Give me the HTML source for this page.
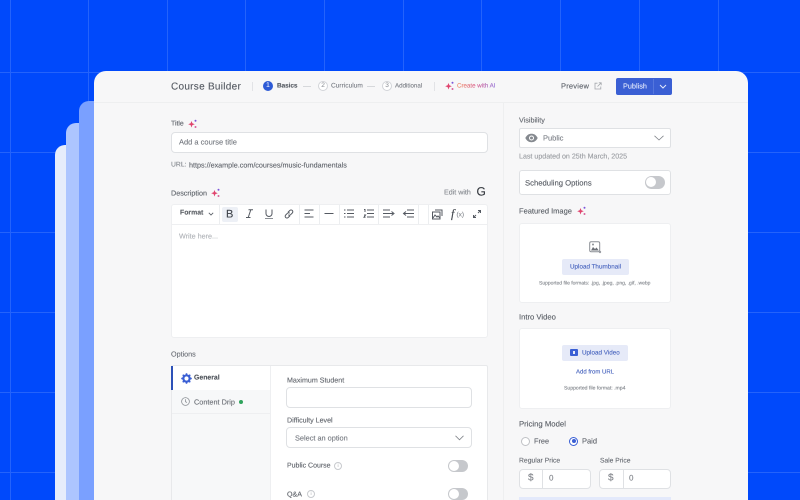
<!DOCTYPE html>
<html><head><meta charset="utf-8">
<style>
*{box-sizing:border-box;margin:0;padding:0}
html,body{width:800px;height:500px;overflow:hidden;background:#0049fb}
body{position:relative;font-family:"Liberation Sans",sans-serif;color:#4a4f57;text-rendering:geometricPrecision}
.a{position:absolute}
.t{position:absolute;white-space:nowrap;line-height:12px;transform:translateY(.7px);-webkit-text-stroke:.12px currentColor}
.v{position:absolute;top:0;width:1px;height:500px;background:#2463fb}
.h{position:absolute;left:0;height:1px;width:800px;background:#2463fb}
.box{position:absolute;background:#fff;border:1px solid #dfe1e4;border-radius:4px}
.wh{position:absolute;background:#fff;border:1px solid #eeeff1;border-radius:3px}
svg{position:absolute;overflow:visible}
.ic{fill:none;stroke:#555a62;stroke-width:1}
.sep{position:absolute;width:1px;background:#eceef0}
.tg{position:absolute;width:20px;height:12px;border-radius:6px;background:#c6c8cc}
.tg:after{content:"";position:absolute;left:1px;top:1px;width:10px;height:10px;border-radius:50%;background:#fff}
.inf{position:absolute;width:8px;height:8px;border-radius:50%;border:1px solid #c8cace;font-size:5px;line-height:6px;text-align:center;color:#a8abb0}
#wrap{position:absolute;inset:0;filter:blur(.3px)}
</style></head><body>
<div id="wrap">
<div class="v" style="left:10px"></div><div class="v" style="left:88px"></div><div class="v" style="left:167px"></div><div class="v" style="left:245px"></div><div class="v" style="left:324px"></div><div class="v" style="left:403px"></div><div class="v" style="left:481px"></div><div class="v" style="left:560px"></div><div class="v" style="left:639px"></div><div class="v" style="left:718px"></div>
<div class="h" style="top:72px"></div><div class="h" style="top:152px"></div><div class="h" style="top:232px"></div><div class="h" style="top:312px"></div><div class="h" style="top:392px"></div><div class="h" style="top:472px"></div>

<div class="a" style="left:55px;top:145px;width:60px;height:355px;background:#e6ecfb;border-radius:10px 0 0 0"></div>
<div class="a" style="left:66px;top:123px;width:60px;height:377px;background:#adc5ff;border-radius:10px 0 0 0"></div>
<div class="a" style="left:79px;top:101px;width:60px;height:399px;background:#7aa0ff;border-radius:10px 0 0 0"></div>
<div class="a" style="left:94px;top:71px;width:654px;height:429px;background:#f7f7f8;border-radius:12px 12px 0 0"></div>
<div class="a" style="left:94px;top:102px;width:654px;height:1px;background:#eeeff0"></div>
<div class="a" style="left:503px;top:102px;width:1px;height:398px;background:#eeeff0"></div>

<!-- Header -->
<div class="t" style="left:171px;top:79.500px;font-size:10px;letter-spacing:.28px;color:#565b63;line-height:13px">Course Builder</div>
<div class="sep" style="left:252px;top:82px;height:9px;background:#e2e3e6"></div>
<div class="a" style="left:263px;top:81px;width:10px;height:10px;border-radius:50%;background:#2d5ad6;color:#fff;font-size:7px;line-height:10px;text-align:center">1</div>
<div class="t" style="left:277px;top:80px;font-size:6.500px;font-weight:bold;color:#565b63;letter-spacing:-.1px">Basics</div>
<div class="a" style="left:303px;top:86px;width:8px;height:1px;background:#d6d8db"></div>
<div class="a" style="left:318px;top:81px;width:10px;height:10px;border-radius:50%;background:#fff;border:1px solid #d2d4d8;color:#85898f;font-size:6.500px;line-height:8px;text-align:center">2</div>
<div class="t" style="left:331px;top:80px;font-size:6.600px;color:#7d8188">Curriculum</div>
<div class="a" style="left:367px;top:86px;width:8px;height:1px;background:#d6d8db"></div>
<div class="a" style="left:382px;top:81px;width:10px;height:10px;border-radius:50%;background:#fff;border:1px solid #d2d4d8;color:#85898f;font-size:6.500px;line-height:8px;text-align:center">3</div>
<div class="t" style="left:395px;top:80px;font-size:6.200px;color:#7d8188">Additional</div>
<div class="sep" style="left:434px;top:82px;height:9px;background:#e2e3e6"></div>
<svg style="left:445px;top:81px" width="10" height="10" viewBox="0 0 10 10"><path d="M3.500 2l.9 2.300L6.800 5.200l-2.400.9-.9 2.400-.9-2.400L.2 5.200l2.400-.9z" fill="#e0446e"/><circle cx="7.500" cy="1.800" r="1" fill="#7c56d8"/><circle cx="7.500" cy="8" r="1" fill="#d8609a"/></svg>
<div class="t" style="left:457px;top:80px;font-size:6.200px;background:linear-gradient(90deg,#f08a60,#d85c8c 50%,#8c6cd8);-webkit-background-clip:text;background-clip:text;color:transparent">Create with AI</div>
<div class="t" style="left:561px;top:80px;font-size:7.500px;letter-spacing:.2px;color:#5b6068">Preview</div>
<svg style="left:594px;top:82px" width="8" height="8" viewBox="0 0 8 8"><path d="M3.500 1.200H1v5.800h5.800V4.500M3.500 4.500 7 1M4.800 .8H7.200V3.200" fill="none" stroke="#a4a7ac" stroke-width=".8"/></svg>
<div class="a" style="left:616px;top:78px;width:56px;height:17px;background:#3a5fd4;border-radius:2px"></div>
<div class="t" style="left:623px;top:80px;font-size:7.300px;color:#dfe6fb">Publish</div>
<div class="a" style="left:653px;top:79px;width:1px;height:15px;background:#5576dc"></div>
<svg style="left:659px;top:84px" width="8" height="5" viewBox="0 0 8 5"><path d="M1 1l3 3 3-3" fill="none" stroke="#e3e9fb" stroke-width="1"/></svg>

<!-- Title -->
<div class="t" style="left:171px;top:118px;font-size:6.900px;color:#5f646b">Title</div>
<svg style="left:188px;top:119px" width="10" height="10" viewBox="0 0 10 10"><path d="M3.500 2l.9 2.300L6.800 5.200l-2.400.9-.9 2.400-.9-2.400L.2 5.200l2.400-.9z" fill="#e0446e"/><circle cx="7.500" cy="1.800" r="1" fill="#7c56d8"/><circle cx="7.500" cy="8" r="1" fill="#d8609a"/></svg>
<div class="box" style="left:171px;top:132px;width:317px;height:21px"></div>
<div class="t" style="left:179px;top:136px;font-size:7.500px;color:#777b82">Add a course title</div>
<div class="t" style="left:171px;top:158.500px;font-size:6.800px;color:#888c92">URL:</div>
<div class="t" style="left:189px;top:158.500px;font-size:7.200px;color:#62666d">https://example.com/courses/music-fundamentals</div>

<!-- Description -->
<div class="t" style="left:171px;top:186.500px;font-size:7.200px;color:#5f646b">Description</div>
<svg style="left:211px;top:188px" width="10" height="10" viewBox="0 0 10 10"><path d="M3.500 2l.9 2.300L6.800 5.200l-2.400.9-.9 2.400-.9-2.400L.2 5.200l2.400-.9z" fill="#e0446e"/><circle cx="7.500" cy="1.800" r="1" fill="#7c56d8"/><circle cx="7.500" cy="8" r="1" fill="#d8609a"/></svg>
<div class="t" style="left:444px;top:185.500px;font-size:7.100px;color:#85898f">Edit with</div>
<div class="t" style="left:476.500px;top:184px;font-size:12px;line-height:14px;color:#34383e">G</div>

<div class="wh" style="left:171px;top:204px;width:317px;height:134px"></div>
<div class="a" style="left:172px;top:224px;width:315px;height:1px;background:#eeeff1"></div>
<div class="t" style="left:180px;top:207px;font-size:6.900px;color:#3f444b;font-weight:bold;opacity:.85">Format</div>
<svg style="left:208px;top:212px" width="6" height="4" viewBox="0 0 6 4"><path d="M.8.800 3 3 5.200.8" fill="none" stroke="#555a62" stroke-width=".8"/></svg>
<div class="sep" style="left:219px;top:205px;height:19px"></div>
<div class="a" style="left:222px;top:207px;width:16px;height:15px;background:#edf0f6;border-radius:2px"></div>
<div class="t" style="left:226px;top:207.500px;font-size:11px;line-height:13px;color:#3f444b">B</div>
<svg class="ic" style="left:245px;top:209px" width="9" height="10" viewBox="0 0 9 10"><path d="M3.500.8H8M1 8.500h4.500M5.800.8 3.200 8.500"/></svg>
<svg class="ic" style="left:265px;top:209px" width="8" height="10" viewBox="0 0 8 10"><path d="M1 .5v4a3 3 0 0 0 6 0v-4"/><path d="M0 9.500h8" stroke="#8b8f95"/></svg>
<svg class="ic" style="left:284px;top:209px" width="10" height="10" viewBox="0 0 10 10"><path d="M4 3.200 5.800 1.500a1.700 1.700 0 0 1 2.500 2.500L6.500 5.800a1.700 1.700 0 0 1-2.200 0M6 6.800 4.200 8.500a1.700 1.700 0 0 1-2.500-2.500L3.500 4.200a1.700 1.700 0 0 1 2.200 0"/></svg>
<div class="sep" style="left:299px;top:205px;height:19px"></div>
<svg class="ic" style="left:304px;top:209px" width="10" height="9" viewBox="0 0 10 9"><path d="M.5 1h9M.5 4.500h5.500M.5 8h9"/></svg>
<div class="sep" style="left:319px;top:205px;height:19px"></div>
<svg class="ic" style="left:324px;top:209px" width="10" height="9" viewBox="0 0 10 9"><path d="M.5 4.500h9"/></svg>
<div class="sep" style="left:339px;top:205px;height:19px"></div>
<svg class="ic" style="left:344px;top:209px" width="10" height="9" viewBox="0 0 10 9"><path d="M3 1h7M3 4.500h7M3 8h7M0 1h1.500M0 4.500h1.500M0 8h1.500"/></svg>
<svg class="ic" style="left:364px;top:209px" width="10" height="9" viewBox="0 0 10 9"><path d="M3 1h7M3 4.500h7M3 8h7M0 .5 1 .5V3M0 6h1.500L0 8.300h1.500"/></svg>
<div class="sep" style="left:378px;top:205px;height:19px"></div>
<svg class="ic" style="left:383px;top:209px" width="12" height="9" viewBox="0 0 12 9"><path d="M0 1h7M0 4.500h10M0 8h7M8.500 2.500l2.500 2-2.500 2"/></svg>
<svg class="ic" style="left:403px;top:209px" width="11" height="9" viewBox="0 0 11 9"><path d="M4 1h7M1 4.500h10M4 8h7M3 2.500l-2.500 2 2.500 2"/></svg>
<div class="sep" style="left:418px;top:205px;height:19px"></div>
<div class="sep" style="left:428px;top:205px;height:19px"></div>
<svg class="ic" style="left:432px;top:209px" width="11" height="11" viewBox="0 0 11 11"><rect x=".5" y="3" width="7.500" height="7"/><path d="M3 1h7v6M1 9l2-3 2 2 1-1 2 2"/></svg>
<div class="t" style="left:451px;top:207px;font-size:12px;line-height:13px;font-style:italic;font-family:'Liberation Serif',serif;color:#3f444b">f</div>
<div class="t" style="left:456.500px;top:209px;font-size:6.500px;color:#888c92">(x)</div>
<svg class="ic" style="left:473px;top:210px" width="8" height="8" viewBox="0 0 8 8"><path d="M.5 7.500 3 5M5 3 7.500.5M5 .5h2.500V3M.5 5v2.500H3"/></svg>
<div class="t" style="left:179px;top:230px;font-size:7.200px;color:#b0b3b8">Write here...</div>

<!-- Options -->
<div class="t" style="left:171px;top:347.500px;font-size:7.200px;color:#6a6e75">Options</div>
<div class="wh" style="left:171px;top:365px;width:317px;height:140px;border-color:#e8e9eb;border-radius:2px"></div>
<div class="a" style="left:172px;top:390px;width:98px;height:110px;background:#f7f8f9"></div>
<div class="a" style="left:172px;top:413px;width:98px;height:1px;background:#eeeff1"></div>
<div class="a" style="left:270px;top:366px;width:1px;height:134px;background:#eeeff1"></div>
<div class="a" style="left:171px;top:366px;width:2px;height:24px;background:#2d52b8"></div>
<svg style="left:180.500px;top:372.500px" width="11" height="11" viewBox="0 0 10 10"><circle cx="5" cy="5" r="2.900" fill="none" stroke="#3a5fd4" stroke-width="2"/><path d="M5 .2v1.800M5 8v1.800M.2 5H2M8 5h1.800M1.600 1.600l1.200 1.200M7.200 7.200l1.200 1.200M1.600 8.400l1.200-1.200M7.200 2.800l1.200-1.200" stroke="#3a5fd4" stroke-width="1.400"/></svg>
<div class="t" style="left:194px;top:372px;font-size:6.900px;font-weight:bold;color:#50555c">General</div>
<svg style="left:181px;top:397px" width="9" height="9" viewBox="0 0 9 9"><circle cx="4.500" cy="4.500" r="3.900" fill="none" stroke="#8b8f95" stroke-width=".8"/><path d="M4.500 2.300v2.400l1.500.8" fill="none" stroke="#8b8f95" stroke-width=".8"/></svg>
<div class="t" style="left:194px;top:395.500px;font-size:7.300px;color:#6c7077">Content Drip</div>
<div class="a" style="left:239px;top:399.500px;width:4px;height:4px;border-radius:50%;background:#2fa35c"></div>

<div class="t" style="left:287px;top:373.500px;font-size:7.100px;color:#62666d">Maximum Student</div>
<div class="box" style="left:286px;top:387px;width:186px;height:21px"></div>
<div class="t" style="left:287px;top:413.500px;font-size:7.100px;color:#62666d">Difficulty Level</div>
<div class="box" style="left:286px;top:427px;width:186px;height:21px"></div>
<div class="t" style="left:295px;top:431.500px;font-size:7.350px;color:#777b82">Select an option</div>
<svg style="left:455px;top:435px" width="9" height="6" viewBox="0 0 9 6"><path d="M.5.800 4.500 4.800 8.500.8" fill="none" stroke="#80848a" stroke-width=".8"/></svg>
<div class="t" style="left:287px;top:460px;font-size:7px;color:#62666d">Public Course</div>
<div class="inf" style="left:334px;top:462px">i</div>
<div class="tg" style="left:448px;top:460px"></div>
<div class="t" style="left:287px;top:488px;font-size:7.100px;color:#62666d">Q&amp;A</div>
<div class="inf" style="left:307px;top:490px">i</div>
<div class="tg" style="left:448px;top:488px"></div>

<!-- Sidebar -->
<div class="t" style="left:519px;top:114px;font-size:7.200px;color:#666a71">Visibility</div>
<div class="box" style="left:519px;top:128px;width:152px;height:20px;border-radius:2px"></div>
<svg style="left:525px;top:133px" width="13" height="10" viewBox="0 0 13 10"><path d="M.3 5C2 1.800 4 .8 6.500.8S11 1.800 12.700 5C11 8.200 9 9.200 6.500 9.200S2 8.200.3 5z" fill="#85898f"/><circle cx="6.500" cy="5" r="2.500" fill="#fff"/><circle cx="6.500" cy="5" r="1.500" fill="#85898f"/></svg>
<div class="t" style="left:543px;top:132px;font-size:7.500px;color:#7d8188">Public</div>
<svg style="left:654px;top:135px" width="10" height="6" viewBox="0 0 10 6"><path d="M.5.800 5 5 9.500.8" fill="none" stroke="#80848a" stroke-width=".8"/></svg>
<div class="t" style="left:519px;top:150px;font-size:7.100px;color:#999ca1">Last updated on 25th March, 2025</div>
<div class="box" style="left:519px;top:170px;width:152px;height:25px;border-radius:3px"></div>
<div class="t" style="left:525px;top:177px;font-size:7.700px;color:#565b63">Scheduling Options</div>
<div class="tg" style="left:645px;top:176px;height:13px;border-radius:7px"></div>
<div class="t" style="left:519px;top:205px;font-size:7.500px;color:#5a5f66">Featured Image</div>
<svg style="left:577px;top:206px" width="10" height="10" viewBox="0 0 10 10"><path d="M3.500 2l.9 2.300L6.800 5.200l-2.400.9-.9 2.400-.9-2.400L.2 5.200l2.400-.9z" fill="#e0446e"/><circle cx="7.500" cy="1.800" r="1" fill="#7c56d8"/><circle cx="7.500" cy="8" r="1" fill="#d8609a"/></svg>
<div class="wh" style="left:519px;top:223px;width:152px;height:80px"></div>
<svg style="left:589px;top:241px" width="13" height="13" viewBox="0 0 13 13"><rect x=".7" y=".7" width="10" height="10" rx="1.500" fill="#fff" stroke="#8b8f95"/><path d="M2 9.500 4 6l2 2 1.500-1.500L9.800 9.500z" fill="#6c7077"/><circle cx="4" cy="3.500" r="1" fill="#8b8f95"/><circle cx="11" cy="11" r="1.200" fill="#9a9da3"/></svg>
<div class="a" style="left:562px;top:259px;width:67px;height:16px;background:#e6eaf8;border-radius:2px"></div>
<div class="t" style="left:570px;top:260.500px;font-size:6.300px;color:#4a66bf">Upload Thumbnail</div>
<div class="t" style="left:539px;top:277px;font-size:5px;color:#85898f">Supported file formats: .jpg, .jpeg, .png, .gif, .webp</div>

<div class="t" style="left:519px;top:311px;font-size:7.650px;color:#5a5f66">Intro Video</div>
<div class="wh" style="left:519px;top:328px;width:152px;height:81px"></div>
<div class="a" style="left:562px;top:345px;width:66px;height:16px;background:#e6eaf8;border-radius:2px"></div>
<div class="a" style="left:570px;top:349px;width:8px;height:7px;background:#3a5fd4;border-radius:1px"></div>
<div class="a" style="left:573px;top:351px;width:2px;height:3px;background:#e6eaf8"></div>
<div class="t" style="left:582px;top:347px;font-size:6.300px;color:#4a66bf">Upload Video</div>
<div class="t" style="left:576px;top:366px;font-size:6px;color:#4a66bf">Add from URL</div>
<div class="t" style="left:564px;top:381.500px;font-size:5.100px;color:#85898f">Supported file format: .mp4</div>

<div class="t" style="left:519px;top:418px;font-size:7.750px;color:#5a5f66">Pricing Model</div>
<div class="a" style="left:520.500px;top:436.500px;width:9px;height:9px;border-radius:50%;background:#fff;border:1px solid #bfc1c5"></div>
<div class="t" style="left:534px;top:434.500px;font-size:7.300px;color:#62666d">Free</div>
<div class="a" style="left:569px;top:436.500px;width:9px;height:9px;border-radius:50%;background:#fff;border:1px solid #3a5fd4"></div>
<div class="a" style="left:571.500px;top:439px;width:4px;height:4px;border-radius:50%;background:#3a5fd4"></div>
<div class="t" style="left:582px;top:434.500px;font-size:7.500px;color:#62666d">Paid</div>
<div class="t" style="left:519px;top:454.500px;font-size:6.800px;color:#6a6e75">Regular Price</div>
<div class="t" style="left:600px;top:454.500px;font-size:6.700px;color:#6a6e75">Sale Price</div>
<div class="box" style="left:519px;top:469px;width:72px;height:20px"></div>
<div class="a" style="left:542px;top:470px;width:1px;height:18px;background:#dfe1e4"></div>
<div class="t" style="left:528px;top:472px;font-size:10px;color:#80848a">$</div>
<div class="t" style="left:549px;top:472px;font-size:8px;color:#85898f">0</div>
<div class="box" style="left:599px;top:469px;width:72px;height:20px"></div>
<div class="a" style="left:623px;top:470px;width:1px;height:18px;background:#dfe1e4"></div>
<div class="t" style="left:608px;top:472px;font-size:10px;color:#80848a">$</div>
<div class="t" style="left:629px;top:472px;font-size:8px;color:#85898f">0</div>
<div class="a" style="left:519px;top:497px;width:152px;height:3px;background:#e3e9fb"></div>
</div>
</body></html>
